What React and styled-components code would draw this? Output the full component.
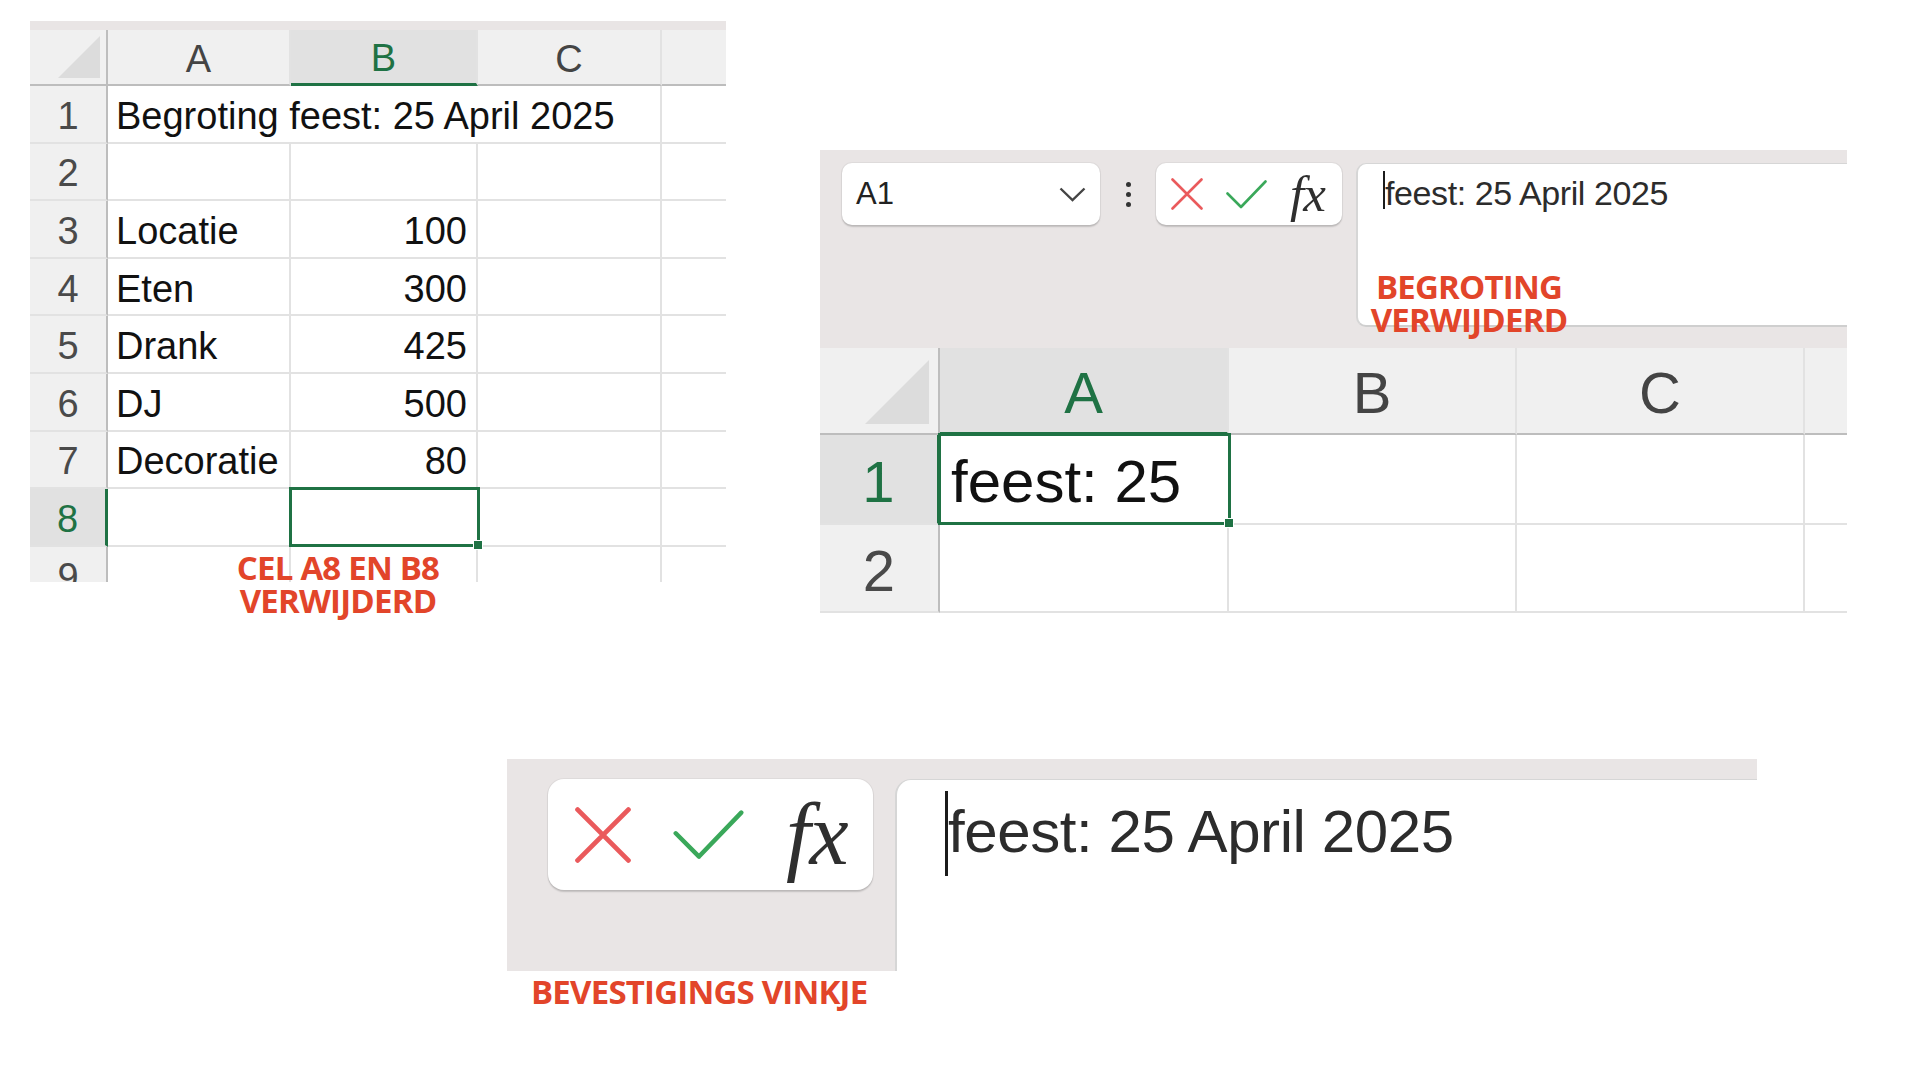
import styled, { createGlobalStyle } from "styled-components";

const GREEN = "#1f7244";
const TOOLBAR = "#e9e5e5";

const GlobalStyle = createGlobalStyle`
  html, body {
    margin: 0;
    padding: 0;
    background: #ffffff;
  }
  body {
    width: 1920px;
    height: 1080px;
    overflow: hidden;
    font-family: "Liberation Sans", Arial, sans-serif;
  }
`;

const Canvas = styled.div`
  width: 1920px;
  height: 1080px;
  display: flex;
  flex-direction: column;
`;

const TopRow = styled.div`
  display: flex;
  align-items: flex-start;
  padding: 21px 0 0 30px;
`;

const BottomBlock = styled.div`
  margin: 146px 0 0 507px;
  display: flex;
  flex-direction: column;
`;

/* ---------- annotation text ---------- */

const Note = styled.div`
  position: absolute;
  left: ${(p) => p.$x}px;
  top: ${(p) => p.$y}px;
  transform: translateX(-50%);
  font-family: "Open Sans", "Liberation Sans", sans-serif;
  font-weight: 700;
  font-size: 33px;
  line-height: 33px;
  color: #e2452a;
  text-align: center;
  white-space: nowrap;
  letter-spacing: -0.8px;
  z-index: 5;
`;

const Caption = styled.div`
  margin: 4px 0 0 24px;
  font-family: "Open Sans", "Liberation Sans", sans-serif;
  font-weight: 700;
  font-size: 33px;
  line-height: 33px;
  color: #e2452a;
  white-space: nowrap;
  letter-spacing: -0.8px;
`;

/* ---------- sheet grid ---------- */

const Cut = styled.div`
  position: relative;
  width: ${(p) => p.$w}px;
  margin: ${(p) => p.$margin || 0};
`;

const Strip = styled.div`
  height: ${(p) => p.$h}px;
  background: ${TOOLBAR};
`;

const Grid = styled.div`
  display: grid;
  grid-template-columns: ${(p) => p.$cols};
  grid-template-rows: ${(p) => p.$rows};
  height: ${(p) => p.$h}px;
  overflow: hidden;
  font-size: ${(p) => p.$font}px;
`;

const Corner = styled.div`
  position: relative;
  background: #f0f0f0;
  border-right: 2px solid #bdbdbd;
  border-bottom: 2px solid #bdbdbd;

  &::after {
    content: "";
    position: absolute;
    right: ${(p) => p.$inset}px;
    bottom: ${(p) => p.$inset}px;
    width: ${(p) => p.$tri}px;
    height: ${(p) => p.$tri}px;
    background: #dcdcdc;
    clip-path: polygon(100% 0, 100% 100%, 0 100%);
  }
`;

const ColHead = styled.div`
  display: flex;
  align-items: center;
  justify-content: center;
  padding-top: 4px;
  background: ${(p) => (p.$active ? "#e1e1e1" : "#f0f0f0")};
  color: ${(p) => (p.$active ? GREEN : "#444444")};
  border-right: 2px solid #e2e2e2;
  border-bottom: ${(p) => (p.$active ? `3px solid ${GREEN}` : "2px solid #bdbdbd")};
`;

const RowHead = styled.div`
  display: flex;
  align-items: center;
  justify-content: center;
  padding-top: 5px;
  background: ${(p) => (p.$active ? "#e1e1e1" : "#f0f0f0")};
  color: ${(p) => (p.$active ? GREEN : "#4a4a4a")};
  border-right: ${(p) => (p.$active ? `3px solid ${GREEN}` : "2px solid #bdbdbd")};
  border-bottom: 2px solid #e2e2e2;
`;

const Cell = styled.div`
  position: relative;
  grid-column: span ${(p) => p.$span || 1};
  display: flex;
  align-items: center;
  justify-content: ${(p) => (p.$right ? "flex-end" : "flex-start")};
  padding: 5px ${(p) => p.$pad}px 0;
  color: #111111;
  white-space: nowrap;
  border-right: 2px solid #e2e2e2;
  border-bottom: 2px solid #e2e2e2;
  z-index: ${(p) => (p.$selected ? 3 : 1)};

  ${(p) =>
    p.$selected &&
    `
    margin: -2px -2px 0 -2px;
    border: 3px solid ${GREEN};
    &::after {
      content: "";
      position: absolute;
      right: -6px;
      bottom: -6px;
      width: 8px;
      height: 8px;
      background: ${GREEN};
      border: 1px solid #ffffff;
    }
  `}
`;

const budget = [
  ["Begroting feest: 25 April 2025", ""],
  ["", ""],
  ["Locatie", "100"],
  ["Eten", "300"],
  ["Drank", "425"],
  ["DJ", "500"],
  ["Decoratie", "80"],
  ["", ""],
  ["", ""],
];

const BudgetRow = ({ n, a, b }) => (
  <>
    <RowHead $active={n === 8}>{n}</RowHead>
    {n === 1 ? (
      <Cell $pad={8} $span={3}>
        {a}
      </Cell>
    ) : (
      <>
        <Cell $pad={8}>{a}</Cell>
        <Cell $pad={9} $right $selected={n === 8}>
          {b}
        </Cell>
        <Cell $pad={8} />
      </>
    )}
    <Cell $pad={8} />
  </>
);

const BudgetSheet = () => (
  <Cut $w={696}>
    <Strip $h={9} />
    <Grid
      $cols="78px 183px 187px 184px 90px"
      $rows="56px repeat(9, 57.6px)"
      $h={552}
      $font={38}
    >
      <Corner $inset={6} $tri={42} />
      <ColHead>A</ColHead>
      <ColHead $active>B</ColHead>
      <ColHead>C</ColHead>
      <ColHead />
      {budget.map(([a, b], i) => (
        <BudgetRow key={i} n={i + 1} a={a} b={b} />
      ))}
    </Grid>
    <Note $x={308} $y={530}>
      CEL A8 EN B8
      <br />
      VERWIJDERD
    </Note>
  </Cut>
);

/* ---------- formula bar pieces ---------- */

const Bar = styled.div`
  display: flex;
  align-items: flex-start;
  background: ${TOOLBAR};
  width: ${(p) => (p.$w ? `${p.$w}px` : "auto")};
  height: ${(p) => p.$h}px;
  padding: ${(p) => p.$pad};
  box-sizing: border-box;
`;

const Pill = styled.div`
  display: flex;
  align-items: center;
  flex-shrink: 0;
  box-sizing: border-box;
  width: ${(p) => p.$w}px;
  height: ${(p) => p.$h}px;
  padding: ${(p) => p.$pad};
  gap: ${(p) => p.$gap || 0}px;
  justify-content: ${(p) => p.$justify || "flex-start"};
  background: #ffffff;
  border-radius: ${(p) => p.$r}px;
  box-shadow: 0 1.5px 1.5px rgba(0, 0, 0, 0.16), 0 0 0 1px rgba(0, 0, 0, 0.04);
`;

const NameText = styled.span`
  font-size: 31px;
  color: #222222;
`;

const Kebab = styled.div`
  width: 56px;
  height: 62px;
  flex-shrink: 0;
  display: flex;
  flex-direction: column;
  align-items: center;
  justify-content: center;
  gap: 5px;

  span {
    width: 5px;
    height: 5px;
    border-radius: 50%;
    background: #333333;
  }
`;

const Fx = styled.span`
  font-family: "Liberation Serif", "Times New Roman", serif;
  font-style: italic;
  font-size: ${(p) => p.$size}px;
  line-height: 1;
  color: #2f2f2f;
  letter-spacing: -1px;
`;

const Entry = styled.div`
  position: relative;
  flex: 1;
  height: ${(p) => p.$h}px;
  margin-left: ${(p) => p.$gap}px;
  background: #ffffff;
  border-radius: ${(p) => p.$r}px 0 0 ${(p) => (p.$round ? p.$r : 0)}px;
  border-left: 2px solid #d6d6d6;
  border-top: 1px solid #d6d6d6;
  border-bottom: ${(p) => (p.$round ? "2px solid #cfcfcf" : "none")};
  box-sizing: border-box;
  display: flex;
  align-items: flex-start;
  padding: ${(p) => p.$pad};
`;

const Caret = styled.span`
  width: ${(p) => p.$w}px;
  height: ${(p) => p.$h}px;
  background: #1b1b1b;
  flex-shrink: 0;
`;

const EntryText = styled.span`
  font-size: ${(p) => p.$size}px;
  color: #2c2c2c;
  letter-spacing: -0.4px;
  white-space: nowrap;
  margin-top: ${(p) => p.$top}px;
`;

const CrossIcon = ({ size, stroke }) => (
  <svg width={size} height={size} viewBox="0 0 32 32" style={{ flexShrink: 0 }}>
    <path
      d="M1.5 1.5 L30.5 30.5 M30.5 1.5 L1.5 30.5"
      stroke="#ea5a5c"
      strokeWidth={stroke}
      strokeLinecap="round"
      fill="none"
    />
  </svg>
);

const CheckIcon = ({ w, h, stroke }) => (
  <svg width={w} height={h} viewBox="0 0 41 29" style={{ flexShrink: 0 }}>
    <path
      d="M1.5 13.5 L15 27 L39.5 1.5"
      stroke="#3aa85a"
      strokeWidth={stroke}
      strokeLinecap="round"
      strokeLinejoin="round"
      fill="none"
    />
  </svg>
);

const Chevron = () => (
  <svg width="27" height="15" viewBox="0 0 27 15">
    <path d="M1.5 1.5 L13.5 13 L25.5 1.5" stroke="#444444" strokeWidth="2.4" fill="none" />
  </svg>
);

/* ---------- panel 2 ---------- */

const EditSheet = () => (
  <Cut $w={1027} $margin="129px 0 0 94px">
    <Bar $h={198} $pad="13px 0 0 22px">
      <Pill $w={258} $h={62} $r={10} $pad="0 14px" $justify="space-between">
        <NameText>A1</NameText>
        <Chevron />
      </Pill>
      <Kebab>
        <span />
        <span />
        <span />
      </Kebab>
      <Pill $w={186} $h={62} $r={10} $pad="0 0 0 15px" $gap={23}>
        <CrossIcon size={32} stroke={2.6} />
        <CheckIcon w={41} h={29} stroke={2.6} />
        <Fx $size={51}>fx</Fx>
      </Pill>
      <Entry $h={164} $gap={14} $r={10} $round $pad="7px 0 0 25px">
        <Caret $w={2} $h={38} />
        <EntryText $size={34} $top={3}>
          feest: 25 April 2025
        </EntryText>
        <Note $x={111} $y={106}>
          BEGROTING
          <br />
          VERWIJDERD
        </Note>
      </Entry>
    </Bar>
    <Grid
      $cols="120px 289px 288px 288px 70px"
      $rows="87px 90px 88px"
      $h={265}
      $font={58}
    >
      <Corner $inset={9} $tri={64} />
      <ColHead $active>A</ColHead>
      <ColHead>B</ColHead>
      <ColHead>C</ColHead>
      <ColHead />
      <RowHead $active>1</RowHead>
      <Cell $pad={10} $selected style={{ fontSize: 60 }}>
        feest: 25
      </Cell>
      <Cell $pad={10} />
      <Cell $pad={10} />
      <Cell $pad={10} />
      <RowHead>2</RowHead>
      <Cell $pad={10} />
      <Cell $pad={10} />
      <Cell $pad={10} />
      <Cell $pad={10} />
    </Grid>
  </Cut>
);

/* ---------- panel 3 ---------- */

const ConfirmBar = () => (
  <Bar $w={1250} $h={212} $pad="20px 0 0 41px">
    <Pill $w={325} $h={111} $r={16} $pad="0 0 0 27px" $gap={41}>
      <CrossIcon size={56} stroke={2.8} />
      <CheckIcon w={73} h={50} stroke={2.6} />
      <Fx $size={88}>fx</Fx>
    </Pill>
    <Entry $h={192} $gap={22} $r={16} $pad="11px 0 0 48px">
      <Caret $w={3} $h={85} />
      <EntryText $size={60} $top={6}>
        feest: 25 April 2025
      </EntryText>
    </Entry>
  </Bar>
);

export default function App() {
  return (
    <>
      <GlobalStyle />
      <Canvas>
        <TopRow>
          <BudgetSheet />
          <EditSheet />
        </TopRow>
        <BottomBlock>
          <ConfirmBar />
          <Caption>BEVESTIGINGS VINKJE</Caption>
        </BottomBlock>
      </Canvas>
    </>
  );
}
